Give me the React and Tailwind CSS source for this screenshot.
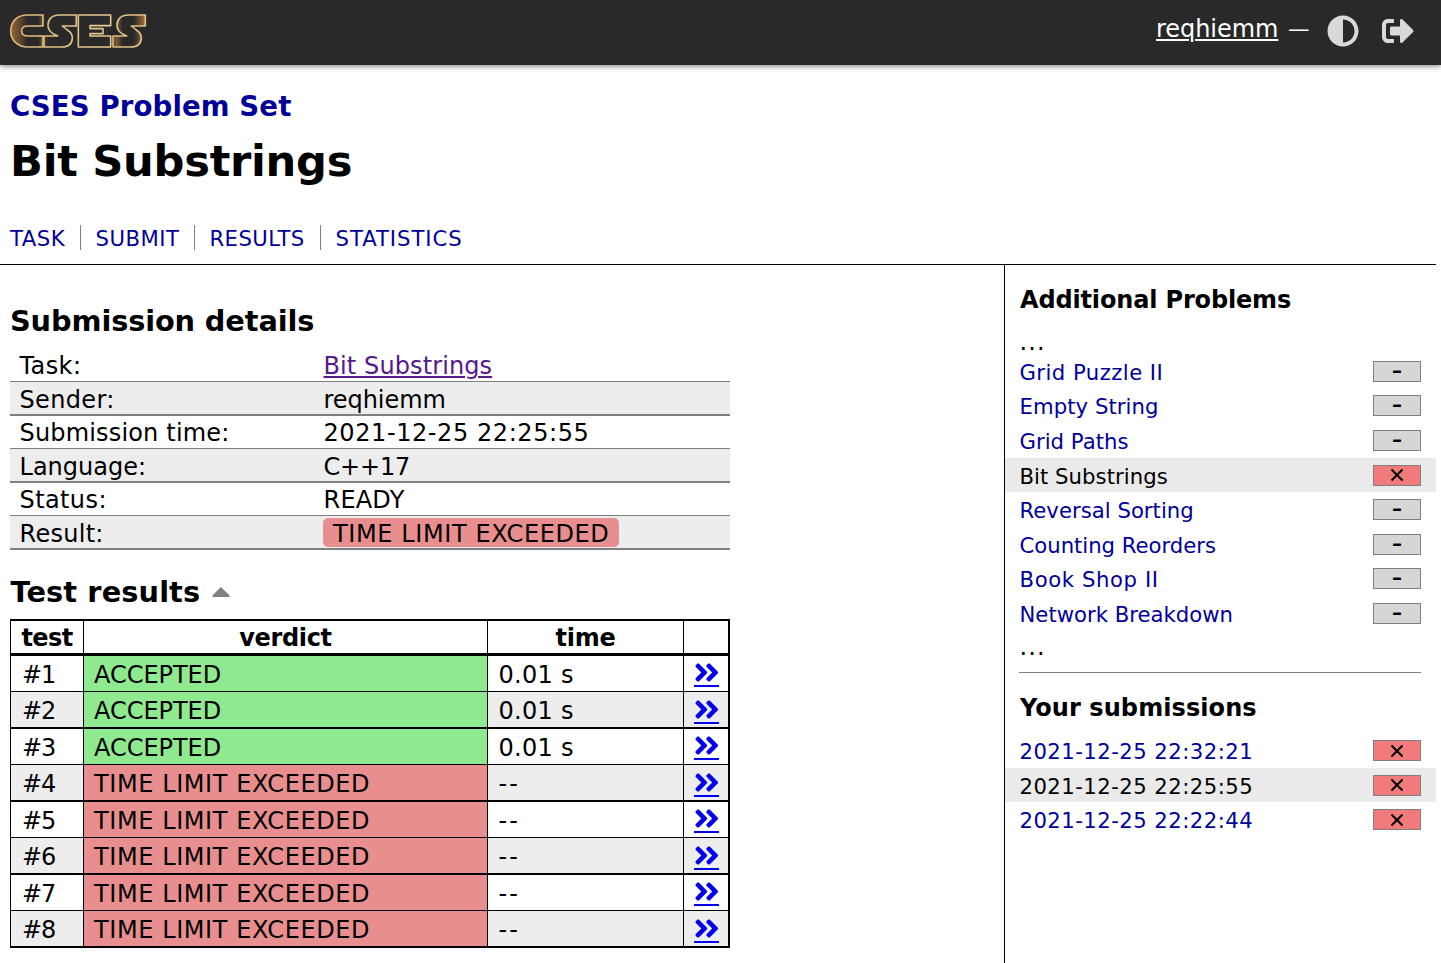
import { FaAdjust, FaAngleDoubleRight, FaSignOutAlt } from "react-icons/fa";

const details = [
  { label: "Task:", ls: "tracking-[0.4px]", value: "Bit Substrings", vls: "tracking-[0.1px]", link: true },
  { label: "Sender:", ls: "tracking-[0.35px]", value: "reqhiemm", vls: "tracking-[-0.05px]" },
  { label: "Submission time:", ls: "tracking-[0.17px]", value: "2021-12-25 22:25:55", vls: "tracking-[0.58px]" },
  { label: "Language:", ls: "tracking-[0.02px]", value: "C++17", vls: "tracking-[-0.2px]" },
  { label: "Status:", ls: "tracking-[0.4px]", value: "READY", vls: "tracking-[0.2px]" },
  { label: "Result:", ls: "tracking-[0.28px]", value: "TIME LIMIT EXCEEDED", vls: "tracking-[0.61px]", chip: true },
];

const tests = [
  { id: "#1", ok: true, time: "0.01 s" },
  { id: "#2", ok: true, time: "0.01 s" },
  { id: "#3", ok: true, time: "0.01 s" },
  { id: "#4", ok: false, time: "--" },
  { id: "#5", ok: false, time: "--" },
  { id: "#6", ok: false, time: "--" },
  { id: "#7", ok: false, time: "--" },
  { id: "#8", ok: false, time: "--" },
];

const problems = [
  { name: "Grid Puzzle II", ls: "tracking-[0.45px]" },
  { name: "Empty String", ls: "tracking-[0.06px]" },
  { name: "Grid Paths", ls: "tracking-[0.02px]" },
  { name: "Bit Substrings", ls: "tracking-[0.04px]", failed: true, current: true },
  { name: "Reversal Sorting", ls: "tracking-[0.02px]" },
  { name: "Counting Reorders", ls: "tracking-[-0.02px]" },
  { name: "Book Shop II", ls: "tracking-[0.6px]" },
  { name: "Network Breakdown", ls: "tracking-[0px]" },
];

const submissions = [
  { name: "2021-12-25 22:32:21", ls: "tracking-[0.45px]", failed: true },
  { name: "2021-12-25 22:25:55", ls: "tracking-[0.45px]", failed: true, current: true },
  { name: "2021-12-25 22:22:44", ls: "tracking-[0.45px]", failed: true },
];

const S_SHAPE =
  "M229 45 H178 C156 45 144 58 144 75 C144 88 150 95 158 100 L173 108 H132 V141 H184 C206 141 217 130 217 113 C217 101 210 95 202 90 L187 78 H229 Z";

function Logo() {
  return (
    <svg className="block h-[53px] w-[150px]" viewBox="0 0 450 159" role="img" aria-label="CSES">
      <defs>
        <linearGradient id="shadeLeft" x1="0" x2="1" y1="0" y2="0">
          <stop offset="0" stopColor="#94683a" />
          <stop offset="0.35" stopColor="#54402a" />
          <stop offset="0.5" stopColor="#292929" />
          <stop offset="0.85" stopColor="#292929" />
          <stop offset="1" stopColor="#7a5531" />
        </linearGradient>
        <linearGradient id="shadeSoft" x1="0" x2="1" y1="0" y2="0">
          <stop offset="0" stopColor="#4d3a26" />
          <stop offset="0.15" stopColor="#292929" />
          <stop offset="0.85" stopColor="#292929" />
          <stop offset="1" stopColor="#3d3022" />
        </linearGradient>
        <linearGradient id="shadeRight" x1="0" x2="1" y1="0" y2="0">
          <stop offset="0" stopColor="#5c452b" />
          <stop offset="0.12" stopColor="#7a5733" />
          <stop offset="0.3" stopColor="#292929" />
          <stop offset="0.65" stopColor="#292929" />
          <stop offset="1" stopColor="#a8733c" />
        </linearGradient>
        <linearGradient id="edge" gradientUnits="userSpaceOnUse" x1="30" x2="440" y1="0" y2="0">
          <stop offset="0" stopColor="#dcb878" />
          <stop offset="0.85" stopColor="#e8cd96" />
          <stop offset="1" stopColor="#f2ebe0" />
        </linearGradient>
      </defs>
      <g stroke="url(#edge)" strokeWidth="4.8" strokeLinejoin="round">
        <path
          fill="url(#shadeLeft)"
          d="M129 45 H82 C52 45 32 64 32 93 C32 122 54 141 84 141 H129 V108 H84 C72 108 65 102 65 93 C65 84 72 78 84 78 H129 Z"
        />
        <path fill="url(#shadeSoft)" d={S_SHAPE} />
        <path fill="#292929" d="M235 45 H332 V77 H270 V86 H309 V101 H270 V108 H332 V141 H235 Z" />
        <path fill="url(#shadeRight)" transform="translate(207 0)" d={S_SHAPE} />
      </g>
    </svg>
  );
}

function Badge({ failed }) {
  return failed ? (
    <span className="mt-[7px] flex h-[21px] w-12 items-center justify-center border border-[#7f7f7f] bg-[#f17b7b]">
      <svg className="h-3 w-3" viewBox="0 0 12 12" stroke="#000" strokeWidth="2">
        <path d="M0.5 0.5 L11.5 11.5 M11.5 0.5 L0.5 11.5" />
      </svg>
    </span>
  ) : (
    <span className="mt-[7px] flex h-[21px] w-12 items-center justify-center border border-[#7f7f7f] bg-[#d6d6d6]">
      <span className="h-[19px] text-[20px] leading-[17px] font-bold">–</span>
    </span>
  );
}

function SideRow({ name, ls, failed, current }) {
  return (
    <li className={`flex h-[34.55px] items-start justify-between pr-[15px] pl-[14.5px] ${current ? "bg-[#eaeaea]" : ""}`}>
      <a className={`text-[21.2px] leading-[37px] ${ls} ${current ? "text-black" : "text-[#000099]"}`}>{name}</a>
      <Badge failed={failed} />
    </li>
  );
}

export default function App() {
  return (
    <div className="flex h-[963px] w-[1441px] flex-col overflow-hidden bg-white font-['DejaVu_Sans',Verdana,sans-serif] text-2xl text-black">
      <header className="flex h-[65px] shrink-0 justify-between bg-[#292929] pr-[27px] shadow-[0_1px_6px_rgba(0,0,0,0.55)]">
        <Logo />
        <div className="flex h-[60px] items-center text-[#d9d9d9]">
          <a className="mb-[2px] w-[122px] leading-[30px] tracking-[-0.05px] text-white underline decoration-2 underline-offset-[2px]">reqhiemm</a>
          <span className="mb-[2px] ml-[10px] w-[22px] text-[21.5px] leading-[30px] text-white">—</span>
          <FaAdjust className="mt-px ml-[17px] h-8 w-8" />
          <FaSignOutAlt className="mt-px ml-[23px] h-8 w-8" />
        </div>
      </header>

      <div className="flex h-[200px] w-[1436px] shrink-0 flex-col border-b border-black pt-[24px] pl-[10px]">
        <a className="text-[27.6px] leading-[36px] font-bold tracking-[0.1px] text-[#000099]">CSES Problem Set</a>
        <h1 className="mt-[10px] text-[43.2px] leading-[52px] font-bold tracking-[-0.28px]">Bit Substrings</h1>
        <nav className="mt-[38px] flex h-[25px] text-[21.2px] leading-[27px] text-[#000099]">
          <a className="w-[71px] border-r border-[#808080] tracking-[0.5px]">TASK</a>
          <a className="w-[114px] border-r border-[#808080] pl-[14.5px] tracking-[0.5px]">SUBMIT</a>
          <a className="w-[126px] border-r border-[#808080] pl-[14.5px] tracking-[0.4px]">RESULTS</a>
          <a className="pl-[14.5px] tracking-[0.95px]">STATISTICS</a>
        </nav>
      </div>

      <div className="flex w-[1436px] grow">
        <main className="w-[1004px] pt-[38px] pl-[10px]">
          <h2 className="text-[28.8px] leading-[36px] font-bold tracking-[-0.12px]">Submission details</h2>
          <div className="mt-[10px] w-[720px]">
            {details.map((d, i) => (
              <div
                key={d.label}
                className={`flex border-[#808080] ${
                  i % 2 ? "h-[34px] border-b-2 bg-[#ededed] leading-[36px]" : "h-[33px] border-b leading-[34px]"
                }`}
              >
                <div className={`w-[313px] pl-[9.5px] ${d.ls}`}>{d.label}</div>
                {d.chip ? (
                  <div className={`mt-[2px] h-[29px] w-[296px] rounded-[5px] bg-[#e88e8e] pl-[10px] leading-[32px] ${d.vls}`}>{d.value}</div>
                ) : (
                  <div className={`pl-[0.5px] ${d.vls} ${d.link ? "text-[#551a8b] underline decoration-2 underline-offset-[2px]" : ""}`}>
                    {d.value}
                  </div>
                )}
              </div>
            ))}
          </div>

          <div className="mt-[24px] flex">
            <h2 className="pl-[0.5px] text-[28.8px] leading-[36px] font-bold tracking-[0.11px]">Test results</h2>
            <svg className="mt-[13px] ml-[11.5px] h-[10px] w-[18px]" viewBox="0 0 18 10" fill="#808080">
              <path d="M9 0 L17.6 8.4 V10 H0.4 V8.4 Z" />
            </svg>
          </div>

          <div className="mt-[9px] w-[720px] border-t-2 border-r-2 border-l border-black">
            <div className="grid h-[35px] grid-cols-[73px_404px_196px_44px] grid-rows-1 border-b-3 border-black text-center leading-[34px] font-bold">
              <div className="border-r border-black tracking-[-0.6px]">test</div>
              <div className="border-r border-black tracking-[-0.35px]">verdict</div>
              <div className="border-r border-black tracking-[-0.3px]">time</div>
              <div />
            </div>
            {tests.map((t, i) => (
              <div
                key={t.id}
                className={`grid grid-cols-[73px_404px_196px_44px] grid-rows-1 border-black leading-[39px] ${
                  i % 2 ? "h-[37px] border-b-2 bg-[#ededed]" : "h-[36px] border-b"
                }`}
              >
                <div className="border-r border-black pl-[11px] tracking-[-1px]">{t.id}</div>
                <div
                  className={`border-r border-black pl-[10px] ${
                    t.ok ? "bg-[#8fe98f] tracking-[-0.04px]" : "bg-[#e88e8e] tracking-[0.59px]"
                  }`}
                >
                  {t.ok ? "ACCEPTED" : "TIME LIMIT EXCEEDED"}
                </div>
                <div className={`border-r border-black pl-[10.5px] ${t.ok ? "tracking-[0.3px]" : "tracking-[2px]"}`}>{t.time}</div>
                <a
                  className={`ml-[9.5px] flex w-[25.5px] items-start border-b-2 border-[#0000ee] text-[#0000ee] ${
                    i % 2 ? "h-[32px] pt-[2.5px]" : "h-[31px] pt-[2px]"
                  }`}
                >
                  <FaAngleDoubleRight className="h-[29px] w-[25.5px] shrink-0" />
                </a>
              </div>
            ))}
          </div>
        </main>

        <aside className="w-[432px] border-l border-black pt-[18px]">
          <h4 className="pl-[15px] leading-[34px] font-bold tracking-[-0.16px]">Additional Problems</h4>
          <div className="mt-[9px] h-[27.9px] pl-[14.5px] leading-[32px] tracking-[1.1px]">...</div>
          <ul>
            {problems.map((p) => (
              <SideRow key={p.name} {...p} />
            ))}
          </ul>
          <div className="mt-[2.7px] h-[39px] pl-[14.5px] leading-[29px] tracking-[1.1px]">...</div>
          <hr className="mr-[15px] ml-[14px] border-[#808080]" />
          <h4 className="mt-[18px] pl-[15px] leading-[34px] font-bold tracking-[0.08px]">Your submissions</h4>
          <ul className="mt-[8.3px]">
            {submissions.map((s) => (
              <SideRow key={s.name} {...s} />
            ))}
          </ul>
        </aside>
      </div>
    </div>
  );
}
